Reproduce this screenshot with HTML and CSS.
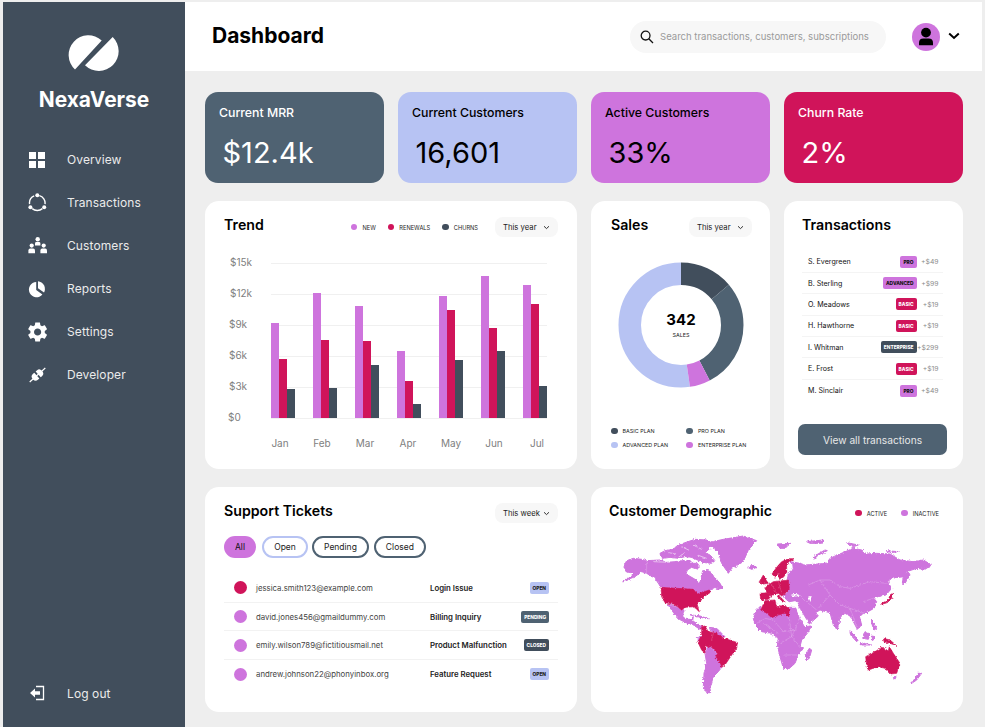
FILE: index.html
```html
<!DOCTYPE html>
<html lang="en">
<head>
<meta charset="utf-8">
<title>NexaVerse Dashboard</title>
<link rel="stylesheet" href="styles.css">
</head>
<body>
<div class="app">
  <aside class="sidebar">
    <svg class="logo" viewBox="68 34 53 38"><path d="M75 69.5A19.6 19.6 0 0 1 101.7 40.5Z"/><path d="M112.7 37A19.6 19.6 0 0 1 85 65.3Z"/></svg>
    <div class="brand">NexaVerse</div>
    <nav class="nav">
      <a class="nav-item"><svg class="nav-icon" viewBox="0 0 20 20"><rect x="1" y="2" width="7" height="7"/><rect x="10" y="2" width="7" height="7"/><rect x="1" y="11" width="7" height="7"/><rect x="10" y="11" width="7" height="7"/></svg>Overview</a>
      <a class="nav-item"><svg class="nav-icon" viewBox="0 0 20 20"><path class="ring" d="M6.2 2.9A7.8 7.8 0 0 0 1.6 11.2M4.2 15.6A7.8 7.8 0 0 0 14.4 15.6M17 11.2A7.8 7.8 0 0 0 11.4 2.6"/><circle cx="9.3" cy="2.2" r="2"/><circle cx="2.4" cy="14.2" r="2"/><circle cx="16.2" cy="14.2" r="2"/></svg>Transactions</a>
      <a class="nav-item"><svg class="nav-icon" viewBox="0 0 20 20"><circle cx="9.7" cy="3.2" r="2.2"/><path d="M7 9.6V7.4Q7 6 8.4 6H11Q12.4 6 12.4 7.4V9.6Z"/><circle cx="3.7" cy="9.6" r="2.1"/><path d="M.4 17.2V14.4Q.4 12.6 2.2 12.6H5.2Q7 12.6 7 14.4V17.2Z"/><circle cx="15.7" cy="9.6" r="2.1"/><path d="M12.4 17.2V14.4Q12.4 12.6 14.2 12.6H17.2Q19 12.6 19 14.4V17.2Z"/></svg>Customers</a>
      <a class="nav-item"><svg class="nav-icon" viewBox="0 0 20 20"><path d="M8.2 3A7.6 7.6 0 1 0 14.4 15.4L8.2 11Z"/><path d="M10 2.2A7.8 7.8 0 0 1 16 13.6L10 9.3Z"/></svg>Reports</a>
      <a class="nav-item"><svg class="nav-icon" viewBox="2.4 2 20 20"><path d="M19.14 12.94c.04-.3.06-.61.06-.94 0-.32-.02-.64-.07-.94l2.03-1.58c.18-.14.23-.41.12-.61l-1.92-3.32c-.12-.22-.37-.29-.59-.22l-2.39.96c-.5-.38-1.03-.7-1.62-.94l-.36-2.54c-.04-.24-.24-.41-.48-.41h-3.84c-.24 0-.43.17-.47.41l-.36 2.54c-.59.24-1.13.57-1.62.94l-2.39-.96c-.22-.08-.47 0-.59.22L2.74 8.87c-.12.21-.08.47.12.61l2.03 1.58c-.05.3-.09.63-.09.94s.02.64.07.94l-2.03 1.58c-.18.14-.23.41-.12.61l1.92 3.32c.12.22.37.29.59.22l2.39-.96c.5.38 1.03.7 1.62.94l.36 2.54c.05.24.24.41.48.41h3.84c.24 0 .44-.17.47-.41l.36-2.54c.59-.24 1.13-.56 1.62-.94l2.39.96c.22.08.47 0 .59-.22l1.92-3.32c.12-.22.07-.47-.12-.61l-2.01-1.58zM12 15.6c-1.98 0-3.6-1.62-3.6-3.6s1.62-3.6 3.6-3.6 3.6 1.62 3.6 3.6-1.62 3.6-3.6 3.6z"/></svg>Settings</a>
      <a class="nav-item"><svg class="nav-icon" viewBox="0 0 20 20"><g transform="rotate(-42 9.5 10)"><rect x="-1" y="9.4" width="21" height="1.2"/><path d="M3.2 6.2H5.2Q8.6 6.2 8.6 10T5.2 13.8H3.2Z" transform="rotate(180 5.9 10)"/><path d="M10.4 6.2H12.4Q15.6 6.2 15.6 10T12.4 13.8H10.4Z"/></g></svg>Developer</a>
    </nav>
    <a class="nav-item logout"><svg class="nav-icon" viewBox="0 0 20 20"><path class="line" d="M8 3.5H15.5V16.5H8"/><path d="M2 10L7 5.5V8.3H12V11.7H7V14.5Z"/></svg>Log out</a>
  </aside>

  <div class="content">
    <header class="topbar">
      <h1 class="page-title">Dashboard</h1>
      <div class="search">
        <svg class="search-icon" viewBox="0 0 14 14"><circle cx="5.6" cy="5.6" r="4.4"/><path d="M8.8 8.8L13 13"/></svg>
        <span>Search transactions, customers, subscriptions</span>
      </div>
      <div class="avatar"><svg viewBox="0 0 28 28"><circle cx="14" cy="9.6" r="4.9"/><path d="M7 22.2V20Q7 15.6 11.4 15.6H16.6Q21 15.6 21 20V22.2Z"/></svg></div>
      <svg class="user-chevron" viewBox="0 0 12 8"><path d="M1.2 1.5L6 6L10.8 1.5"/></svg>
    </header>

    <main class="grid">
      <section class="stat stat-slate"><div class="stat-label">Current MRR</div><div class="stat-value">$12.4k</div></section>
      <section class="stat stat-lav"><div class="stat-label">Current Customers</div><div class="stat-value">16,601</div></section>
      <section class="stat stat-pur"><div class="stat-label">Active Customers</div><div class="stat-value">33%</div></section>
      <section class="stat stat-red"><div class="stat-label">Churn Rate</div><div class="stat-value">2%</div></section>

      <section class="card span2 trend">
        <div class="card-head">
          <h2>Trend</h2>
          <div class="legend">
            <span class="lg"><i class="dot purple"></i>NEW</span>
            <span class="lg"><i class="dot red"></i>RENEWALS</span>
            <span class="lg"><i class="dot dark"></i>CHURNS</span>
          </div>
          <div class="select">This year<svg viewBox="0 0 8 6"><path d="M1 1.5L4 4.3L7 1.5"/></svg></div>
        </div>
        <svg class="chart" viewBox="205 240 372 220">
          <g class="gridlines">
            <path d="M271 263.5H547M271 294.5H547M271 325.5H547M271 356.5H547M271 387.5H547M271 418.5H547"/>
          </g>
          <g class="axis">
            <text x="230" y="266">$15k</text><text x="230" y="297">$12k</text><text x="229" y="328">$9k</text><text x="229" y="359">$6k</text><text x="229" y="390">$3k</text><text x="228" y="421">$0</text>
          </g>
          <g class="axis mid">
            <text x="280" y="447">Jan</text><text x="322" y="447">Feb</text><text x="365" y="447">Mar</text><text x="408" y="447">Apr</text><text x="451" y="447">May</text><text x="494" y="447">Jun</text><text x="537" y="447">Jul</text>
          </g>
          <g class="fill-pur">
            <rect x="271" y="323" width="8" height="95"/><rect x="313" y="293" width="8" height="125"/><rect x="355" y="306" width="8" height="112"/><rect x="397" y="351" width="8" height="67"/><rect x="439" y="296" width="8" height="122"/><rect x="481" y="276" width="8" height="142"/><rect x="523" y="285" width="8" height="133"/>
          </g>
          <g class="fill-red">
            <rect x="279" y="359" width="8" height="59"/><rect x="321" y="340" width="8" height="78"/><rect x="363" y="341" width="8" height="77"/><rect x="405" y="381" width="8" height="37"/><rect x="447" y="310" width="8" height="108"/><rect x="489" y="328" width="8" height="90"/><rect x="531" y="304" width="8" height="114"/>
          </g>
          <g class="fill-dark">
            <rect x="287" y="389" width="8" height="29"/><rect x="329" y="388" width="8" height="30"/><rect x="371" y="365" width="8" height="53"/><rect x="413" y="404" width="8" height="14"/><rect x="455" y="360" width="8" height="58"/><rect x="497" y="351" width="8" height="67"/><rect x="539" y="386" width="8" height="32"/>
          </g>
        </svg>
      </section>

      <section class="card sales">
        <div class="card-head">
          <h2>Sales</h2>
          <div class="select">This year<svg viewBox="0 0 8 6"><path d="M1 1.5L4 4.3L7 1.5"/></svg></div>
        </div>
        <svg class="donut" viewBox="0 0 126 126">
          <g transform="rotate(-90 63 63)">
            <circle class="seg seg-adv" cx="63" cy="63" r="51.25" pathLength="360" stroke-dasharray="188.3 171.7" stroke-dashoffset="-171.7"/>
            <circle class="seg seg-dark" cx="63" cy="63" r="51.25" pathLength="360" stroke-dasharray="50 310"/>
            <circle class="seg seg-slate" cx="63" cy="63" r="51.25" pathLength="360" stroke-dasharray="102.6 257.4" stroke-dashoffset="-50"/>
            <circle class="seg seg-pur" cx="63" cy="63" r="51.25" pathLength="360" stroke-dasharray="19.1 340.9" stroke-dashoffset="-152.6"/>
          </g>
          <text class="donut-num" x="63" y="63">342</text>
          <text class="donut-sub" x="63" y="75">SALES</text>
        </svg>
        <div class="plan-legend">
          <span class="lg"><i class="dot dark"></i>BASIC PLAN</span>
          <span class="lg"><i class="dot slate"></i>PRO PLAN</span>
          <span class="lg"><i class="dot lav"></i>ADVANCED PLAN</span>
          <span class="lg"><i class="dot purple"></i>ENTERPRISE PLAN</span>
        </div>
      </section>

      <section class="card tx">
        <h2 class="tx-title">Transactions</h2>
        <div class="tx-list">
          <div class="tx-row"><span class="tx-name">S. Evergreen</span><span class="tag tag-pur">PRO</span><span class="tx-amt">+$49</span></div>
          <div class="tx-row"><span class="tx-name">B. Sterling</span><span class="tag tag-pur">ADVANCED</span><span class="tx-amt">+$99</span></div>
          <div class="tx-row"><span class="tx-name">O. Meadows</span><span class="tag tag-red">BASIC</span><span class="tx-amt">+$19</span></div>
          <div class="tx-row"><span class="tx-name">H. Hawthorne</span><span class="tag tag-red">BASIC</span><span class="tx-amt">+$19</span></div>
          <div class="tx-row"><span class="tx-name">I. Whitman</span><span class="tag tag-dark">ENTERPRISE</span><span class="tx-amt">+$299</span></div>
          <div class="tx-row"><span class="tx-name">E. Frost</span><span class="tag tag-red">BASIC</span><span class="tx-amt">+$19</span></div>
          <div class="tx-row"><span class="tx-name">M. Sinclair</span><span class="tag tag-pur">PRO</span><span class="tx-amt">+$49</span></div>
        </div>
        <button class="view-all">View all transactions</button>
      </section>

      <section class="card span2 support">
        <div class="card-head">
          <h2>Support Tickets</h2>
          <div class="select">This week<svg viewBox="0 0 8 6"><path d="M1 1.5L4 4.3L7 1.5"/></svg></div>
        </div>
        <div class="pills">
          <span class="pill pill-all">All</span>
          <span class="pill pill-open">Open</span>
          <span class="pill pill-line">Pending</span>
          <span class="pill pill-line">Closed</span>
        </div>
        <div class="tickets">
          <div class="ticket"><i class="t-dot red"></i><span class="t-mail">jessica.smith123@example.com</span><span class="t-sub">Login Issue</span><span class="t-tag"><span class="tag tag-lav">OPEN</span></span></div>
          <div class="ticket"><i class="t-dot purple"></i><span class="t-mail">david.jones456@gmaildummy.com</span><span class="t-sub">Billing Inquiry</span><span class="t-tag"><span class="tag tag-slate">PENDING</span></span></div>
          <div class="ticket"><i class="t-dot purple"></i><span class="t-mail">emily.wilson789@fictitiousmail.net</span><span class="t-sub">Product Malfunction</span><span class="t-tag"><span class="tag tag-dark">CLOSED</span></span></div>
          <div class="ticket"><i class="t-dot purple"></i><span class="t-mail">andrew.johnson22@phonyinbox.org</span><span class="t-sub">Feature Request</span><span class="t-tag"><span class="tag tag-lav">OPEN</span></span></div>
        </div>
      </section>

      <section class="card span2 demo">
        <div class="card-head">
          <h2>Customer Demographic</h2>
          <div class="legend demo-legend">
            <span class="lg"><i class="dot red"></i>ACTIVE</span>
            <span class="lg"><i class="dot purple"></i>INACTIVE</span>
          </div>
        </div>
        <svg class="map" viewBox="610 530 340 170">
          <defs>
            <filter id="rough" filterUnits="userSpaceOnUse" x="600" y="520" width="360" height="190" color-interpolation-filters="sRGB">
              <feTurbulence type="fractalNoise" baseFrequency=".45" numOctaves="2" seed="4" result="n"/>
              <feDisplacementMap in="SourceGraphic" in2="n" scale="3.2" xChannelSelector="R" yChannelSelector="G"/>
            </filter>
          </defs>
          <g class="map-art">
          <g transform="translate(610 530) scale(.33333)">
            <g class="land">
              <polygon points="38,155 55,145 70,135 62,128 48,125 42,108 50,92 70,85 95,88 110,92 150,90 170,97 195,95 215,92 240,93 250,100 262,100 268,108 262,118 245,112 232,120 228,132 245,142 262,152 268,160 272,150 275,135 278,122 295,122 305,128 312,142 320,148 330,160 338,175 325,178 315,172 300,180 298,188 280,190 262,192 250,178 153,172 135,145 110,130 95,125 75,140 55,148"/>
              <polygon points="150,70 165,62 190,58 200,48 225,38 255,28 290,30 305,42 300,55 285,68 300,75 315,92 305,100 285,98 262,90 245,82 225,80 205,85 180,82 160,85 152,78"/>
              <polygon points="295,38 340,28 400,18 440,32 415,60 400,95 365,115 355,130 335,100 325,65 310,55"/>
              <polygon points="413,112 430,106 440,112 425,118"/>
              <polygon points="172,222 188,225 205,232 222,240 218,255 225,268 240,268 250,260 248,272 262,282 278,292 270,298 250,285 228,278 208,268 192,250"/>
              <polygon points="240,254 270,258 295,266 268,262"/>
              <polygon points="298,292 320,295 345,320 335,322 320,310 303,306"/>
              <polygon points="262,322 275,318 268,337"/>
              <polygon points="285,370 293,350 305,352 322,370 318,385 330,395 335,412 325,425 310,440 300,475 302,488 290,488 280,470 282,430 290,400"/>
            </g>
            <g class="active">
              <polygon points="153,172 250,178 262,192 298,180 300,188 282,200 270,215 262,228 268,245 260,238 252,230 225,232 215,240 205,232 190,222 165,218 155,200"/>
              <polygon points="275,290 285,288 295,305 320,310 335,322 383,338 380,355 365,375 345,405 335,412 330,395 318,385 322,370 305,352 293,350 285,347 285,370 275,360 263,335 275,318"/>
            </g>
            <path class="water" d="M175 68L200 72M215 50L240 62M250 45L275 58M262 75L290 85M205 82L225 68M130 95L180 97"/>
            <path class="borders" d="M110 92V130M175 225L205 232M295 345L322 372M310 310L305 330M298 292L310 310"/>
          </g>
          <g transform="translate(750 530) scale(.33333)">
            <g class="land">
              <polygon points="32,228 32,240 50,250 65,263 85,255 105,250 117,260 117,232 135,232 147,262 163,290 185,288 172,310 155,330 150,350 160,355 145,375 135,400 115,418 100,415 90,380 82,345 85,325 65,310 35,305 15,285 10,265 20,240"/>
              <polygon points="178,355 185,360 178,385 168,392 165,375"/>
              <polygon points="112,148 115,128 130,118 128,100 115,94 150,100 165,105 230,100 240,85 262,75 310,55 335,60 350,72 380,70 420,72 450,90 490,95 520,90 545,105 525,118 500,115 470,125 462,140 425,145 413,155 425,175 408,195 385,200 370,203 380,215 372,235 345,250 328,258 335,285 322,298 310,275 300,258 285,250 270,262 262,300 250,285 240,248 228,245 210,240 197,248 205,258 178,282 170,268 152,238 143,222 150,218 135,212 118,215 112,190 118,165"/>
              <polygon points="100,195 118,185 118,215 110,210"/>
              <polygon points="475,125 480,135 465,160 457,160 460,140"/>
              <polygon points="300,302 325,330 320,335 302,315"/>
              <polygon points="330,338 365,345 335,345"/>
              <polygon points="345,305 360,312 355,328 338,325"/>
              <polygon points="365,270 380,295 372,300 365,280"/>
              <polygon points="365,318 375,320 368,332"/>
              <polygon points="430,442 438,442 433,450"/>
              <polygon points="505,430 515,430 500,450 485,460 495,445"/>
              <polygon points="82,42 122,40 105,55 90,55"/>
              <polygon points="190,80 225,60 232,62 205,75 192,88"/>
              <polygon points="170,35 220,30 215,40 180,40"/>
              <polygon points="290,38 325,45 310,50"/>
              <polygon points="408,62 445,65 420,68"/>
              <polygon points="0,108 14,106 18,112 5,117"/>
            </g>
            <g class="active">
              <polygon points="45,212 75,210 78,225 85,232 100,225 117,235 117,260 105,250 85,255 65,263 50,250 32,240"/>
              <polygon points="66,132 80,112 95,95 115,86 132,86 118,96 110,108 110,128 100,142 88,148 85,130 75,142"/>
              <polygon points="40,135 48,150 55,160 35,163 28,155"/>
              <polygon points="30,190 52,188 66,196 55,208 32,210"/>
              <polygon points="45,175 55,165 70,155 115,150 118,175 108,188 95,198 85,190 70,195 52,190"/>
              <polygon points="85,195 105,215 95,212 82,200"/>
              <polygon points="395,220 415,210 420,195 428,190 425,205 412,218 395,223"/>
              <polygon points="400,325 420,330 440,347 420,340 402,335"/>
              <polygon points="347,380 375,365 395,352 415,362 418,350 430,370 450,400 440,430 420,432 405,415 385,410 355,420 350,405"/>
            </g>
            <path class="water-fill" d="M122 195Q135 188 150 196Q135 204 122 195ZM176 198L184 200L182 215L175 210Z"/>
            <path class="borders" d="M175 165L210 150L240 150L270 170L300 175L360 155L410 160M210 150L240 195L270 225L300 235L345 250M240 195L205 235M150 195L175 220L200 240M300 235L320 290M20 280L45 265L70 270L100 305L140 300M117 260L125 320L90 340M150 265L125 320L150 350M100 375L145 375M40 280L85 310M340 215L370 205M60 155L80 190M85 155L95 190"/>
          </g>
          </g>
        </svg>
      </section>
    </main>
  </div>
</div>
</body>
</html>
```

FILE: styles.css
```css
* { box-sizing: border-box; }
html, body { margin: 0; height: 727px; overflow: hidden; }
body { background: #eee; font-family: Inter, "Liberation Sans", sans-serif; color: #000; }
h1, h2 { margin: 0; }
.app { display: flex; height: 727px; padding: 2px 3px 0; }

.sidebar { width: 182px; flex: none; background: #414e5c; display: flex; flex-direction: column; align-items: stretch; padding-top: 32px; padding-bottom: 19px; }
.logo { display: block; width: 53px; height: 38px; margin: 0 0 0 65px; fill: #fff; }
.brand { color: #fff; font-size: 20.9px; font-weight: 700; text-align: center; margin-top: 15px; line-height: 25px; }
.nav { display: flex; flex-direction: column; margin-top: 26px; }
.nav-item { display: flex; align-items: center; height: 43px; padding-left: 25px; color: #ebebeb; font-size: 12px; letter-spacing: .1px; }
.nav-icon { width: 20px; height: 20px; margin-right: 19px; fill: #fff; flex: none; }
.ring { fill: none; stroke: #fff; stroke-width: 1.4; }
.line { fill: none; stroke: #fff; stroke-width: 1.3; }
.logout { margin-top: auto; height: 30px; }

.content { flex: 1; display: flex; flex-direction: column; min-width: 0; }
.topbar { height: 69px; background: #fff; display: flex; align-items: center; padding-left: 27px; flex: none; }
.page-title { font-size: 21px; font-weight: 700; line-height: 26px; margin-top: -1px; }
.search { margin-left: auto; width: 256px; height: 32px; border-radius: 16px; background: #f7f7f7; display: flex; align-items: center; padding-left: 10px; color: #9a9a9a; font-size: 9.55px; }
.search-icon { width: 14px; height: 14px; margin-right: 6px; fill: none; stroke: #111; stroke-width: 1.3; flex: none; }
.avatar { width: 28px; height: 28px; border-radius: 50%; background: #ce74dd; margin-left: 26px; }
.avatar svg { display: block; width: 28px; height: 28px; fill: #000; }
.user-chevron { width: 12px; height: 8px; margin: -1px 22px 0 8px; fill: none; stroke: #000; stroke-width: 2; }

.grid { display: grid; grid-template-columns: repeat(4, 179px); grid-template-rows: 91px 268px 225px; gap: 18px 14px; padding: 21px 0 0 20px; }
.span2 { grid-column: span 2; }
.stat { border-radius: 13px; padding: 13px 14px 0; }
.stat-label { font-size: 12.3px; font-weight: 500; line-height: 16px; }
.stat-value { font-size: 29px; line-height: 36px; margin: 14px 0 0 3.5px; }
.stat-slate { background: #4f6272; color: #fff; }
.stat-lav { background: #b7c3f3; }
.stat-pur { background: #ce74dd; }
.stat-red { background: #d0145a; color: #fff; }

.card { background: #fff; border-radius: 14px; padding: 16px 19px 0; min-width: 0; }
.card-head { display: flex; align-items: center; height: 20px; }
.card h2 { font-size: 14.2px; font-weight: 600; line-height: 20px; }
.card-head h2 { margin-top: -4px; }
.select { margin-left: auto; width: 63px; height: 20px; border-radius: 8px; background: #f7f7f7; display: flex; align-items: center; justify-content: space-between; padding: 0 8px; font-size: 7.7px; color: #222; white-space: nowrap; }
.select svg { width: 7px; height: 5px; fill: none; stroke: #222; stroke-width: 1.1; flex: none; }

.legend { display: flex; gap: 12px; margin-left: auto; margin-right: 17px; font-size: 5.7px; color: #222; }
.legend + .select { margin-left: 0; }
.lg { display: flex; align-items: center; gap: 5px; white-space: nowrap; }
.dot { width: 6.6px; height: 6.6px; border-radius: 50%; display: block; flex: none; }
.purple { background: #ce74dd; }
.red { background: #d0145a; }
.dark { background: #414e5c; }
.slate { background: #4f6272; }
.lav { background: #b7c3f3; }

.chart { display: block; width: 372px; height: 220px; margin: 3px -19px 0; }
.gridlines path { stroke: #f0f0f0; stroke-width: 1; fill: none; }
.axis text { font-size: 10px; fill: #808080; font-family: Inter, sans-serif; }
.axis.mid text { text-anchor: middle; }
.fill-pur { fill: #ce74dd; }
.fill-red { fill: #d0145a; }
.fill-dark { fill: #414e5c; }

.sales { padding: 16px 18px 0 20px; }
.donut { display: block; width: 126px; height: 126px; margin: 25px 0 0 7px; }
.seg { fill: none; stroke-width: 22.5; }
.seg-adv { stroke: #b7c3f3; }
.seg-dark { stroke: #414e5c; }
.seg-slate { stroke: #4f6272; }
.seg-pur { stroke: #ce74dd; }
.donut-num { font-size: 15px; font-weight: 700; text-anchor: middle; font-family: Inter, sans-serif; }
.donut-sub { font-size: 5.4px; text-anchor: middle; font-family: Inter, sans-serif; fill: #222; }
.plan-legend { display: grid; grid-template-columns: 75.3px 1fr; row-gap: 6px; margin: 39px 0 0 0; font-size: 5.4px; line-height: 8px; color: #222; }

.tx { padding: 14px 16px 0 18px; }
.tx-title { line-height: 20px; }
.tx-list { margin: 16.5px 4px 0 0; }
.tx-row { display: flex; align-items: center; height: 21.4px; padding: 0 4.5px 0 6px; border-bottom: 1px solid #f4f4f4; }
.tx-row:last-child { border-bottom: 0; }
.tx-name { font-size: 7.1px; color: #111; margin-right: auto; }
.tx-amt { width: 22px; text-align: right; font-size: 6.8px; color: #8a8a8a; flex: none; }
.tag { display: inline-flex; align-items: center; height: 12px; padding: 0 3px; border-radius: 2px; font-size: 4.8px; font-weight: 800; }
.tag-pur { background: #ce74dd; color: #111; }
.tag-red { background: #d0145a; color: #fff; }
.tag-dark { background: #414e5c; color: #fff; }
.tag-slate { background: #4f6272; color: #fff; }
.tag-lav { background: #b7c3f3; color: #222; }
.view-all { display: block; width: 149px; height: 31px; margin: 23px 0 0 -4px; border: 0; border-radius: 7px; background: #4f6272; color: #e8e8e8; font: 400 10.2px Inter, sans-serif; }

.pills { display: flex; gap: 5px; margin-top: 13px; }
.pill { height: 22px; display: flex; align-items: center; justify-content: center; border-radius: 11px; font-size: 8.5px; color: #222; border: 2px solid transparent; }
.pill-all { width: 32px; background: #ce74dd; color: #111; margin-right: 1px; }
.pill-open { width: 46px; border-color: #b7c3f3; margin-right: -1px; }
.pill-line { padding: 0 10px; border-color: #4f6272; }
.tickets { margin-top: 16px; }
.ticket { display: flex; align-items: center; height: 28.7px; border-bottom: 1px solid #f2f2f2; padding-left: 9.5px; }
.ticket:last-child { border-bottom: 0; }
.t-dot { width: 13px; height: 13px; border-radius: 50%; display: block; flex: none; margin-right: 9.5px; }
.t-mail { width: 174px; font-size: 7.8px; color: #444; flex: none; white-space: nowrap; }
.t-sub { font-size: 7.8px; font-weight: 600; color: #222; white-space: nowrap; }
.t-tag { margin-left: auto; margin-right: 9px; display: flex; }

.demo { padding-left: 18px; }
.demo-legend { gap: 14px; margin-right: 5px; }
.map { display: block; width: 340px; height: 170px; margin: 7px 0 0 1px; }
.map-art { filter: url(#rough); }
.land polygon { fill: #ce74dd; stroke: #ce74dd; stroke-width: 3; stroke-linejoin: round; }
.active polygon { fill: #d0145a; stroke: #d0145a; stroke-width: 2; stroke-linejoin: round; }
.water { fill: none; stroke: #fff; stroke-width: 1.6; }
.water-fill { fill: #fff; }
.borders { fill: none; stroke: #fff; stroke-opacity: .45; stroke-width: 1.3; }
```
